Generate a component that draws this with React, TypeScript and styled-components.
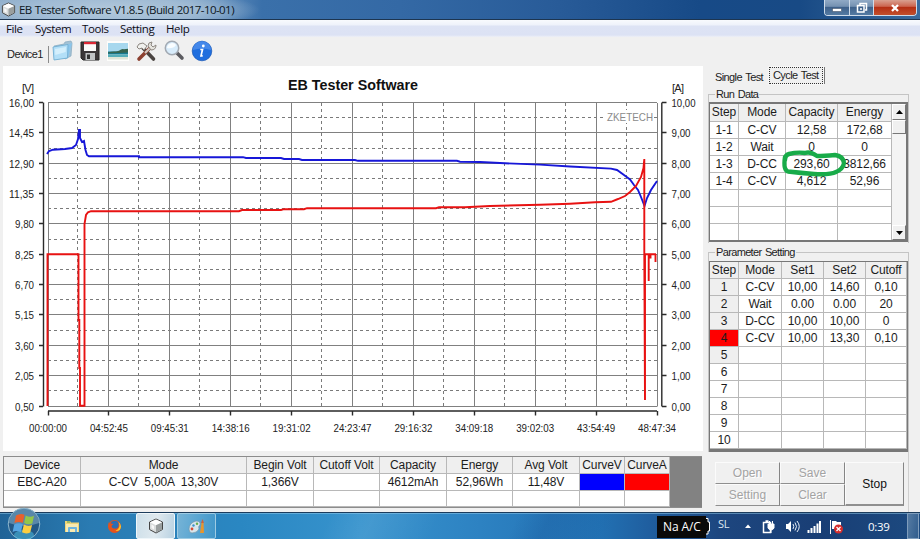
import React from "react";
import styled, { createGlobalStyle, css } from "styled-components";

const GlobalStyle = createGlobalStyle`
  *, *::before, *::after { box-sizing: border-box; }
  body { margin: 0; overflow: hidden; }
`;

const Screen = styled.div`
  width: 920px;
  height: 539px;
  display: flex;
  flex-direction: column;
  overflow: hidden;
  background: #f0f0f0;
  color: #1c1c1c;
  font: 12px "Liberation Sans", Arial, sans-serif;
  svg { display: block; flex: none; }
`;

const TitleBar = styled.header`
  height: 20px;
  flex: none;
  display: flex;
  align-items: flex-start;
  justify-content: space-between;
  padding-left: 1px;
  border-bottom: 1px solid #1d3550;
  background:
    radial-gradient(ellipse 150px 22px at 110px 10px, #b3c9dc 0%, #a0bbd4 55%, rgba(120, 160, 200, 0) 100%),
    linear-gradient(90deg, #8cabc9 0, #7da3c8 190px, #3a70aa 262px, #3469a5 400px, #285b98 560px, #174a87 700px, #184a85 800px, #3a6a9c 920px);
`;
const TitleText = styled.div`
  display: flex;
  align-items: center;
  gap: 3px;
  height: 19px;
  font: 11.5px "Open Sans", "Noto Sans", sans-serif;
  letter-spacing: -0.55px;
  word-spacing: 0.5px;
  color: #0c1622;
  white-space: nowrap;
`;
const WindowButtons = styled.div`
  display: flex;
  margin-right: 3px;
  height: 16px;
  border: 1px solid #cfdcea;
  border-top: 0;
  border-radius: 0 0 4px 4px;
  overflow: hidden;
`;
const WindowButton = styled.div<{ $w: number; $close?: boolean }>`
  width: ${(p) => p.$w}px;
  display: grid;
  place-items: center;
  border-right: ${(p) => (p.$close ? "0" : "1px solid #cfdcea")};
  background: ${(p) =>
    p.$close
      ? "linear-gradient(#d9a090, #cc6650 42%, #b52f14 50%, #c2502c)"
      : "linear-gradient(#91aac6, #7592b2 42%, #3e618b 50%, #557ba3)"};
`;

const MenuBar = styled.nav`
  height: 17px;
  flex: none;
  display: grid;
  grid-template-columns: 29px 47px 38px 46px 40px;
  padding-left: 6px;
  align-items: center;
  background: linear-gradient(#f8fafd 0, #eef2fa 5px, #dde3f4 6px, #dce2f4 15px, #eef0f6 17px);
  font: 11.5px "Open Sans", "Noto Sans", sans-serif;
  letter-spacing: -0.4px;
  color: #0c0c14;
`;
const ToolBar = styled.div`
  height: 29px;
  flex: none;
  display: flex;
  align-items: center;
  padding: 1px 0 0 7px;
`;
const DeviceTab = styled.div`
  width: 42px;
  height: 17px;
  margin-top: 4px;
  border-right: 1px solid #8b8b8b;
  font-size: 11px;
  line-height: 17px;
  letter-spacing: -0.55px;
`;
const Tools = styled.div`
  display: grid;
  grid-template-columns: repeat(6, 28px);
  padding-left: 2px;
  margin-top: -2px;
`;

const Body = styled.main`
  height: 446px;
  flex: none;
  display: flex;
`;
const LeftColumn = styled.section`
  width: 703px;
  padding-left: 3px;
  display: flex;
  flex-direction: column;
`;
const ChartPanel = styled.div`
  height: 385px;
  background: #fff;
`;
const ChartSvg = styled.svg`
  text {
    font-family: "Liberation Sans", Arial, sans-serif;
    font-size: 11px;
    fill: #222;
  }
  .heading { font-size: 14px; font-weight: bold; fill: #111; }
  .mark { fill: #8a8a8a; }
`;

const StatusTable = styled.div`
  margin-top: 5px;
  width: 699px;
  height: 52px;
  display: grid;
  grid-template-columns: 77px 166px 67px 66px 67px 66px 67px 45px 45px 1fr;
  grid-template-rows: 17px 17px 16px;
  background: #828282;
  border: 1px solid #8c8c8c;
  border-right: 0;
`;
const Cell = styled.div<{ $bg?: string }>`
  display: flex;
  align-items: center;
  justify-content: center;
  overflow: hidden;
  white-space: pre;
  line-height: 16px;
  letter-spacing: -0.1px;
  background: ${(p) => p.$bg || "#fff"};
  border-right: 1px solid #b8b8b8;
  border-bottom: 1px solid #b8b8b8;
`;
const Filler = styled.div`
  grid-column: 10;
  grid-row: 1 / 4;
`;

const RightColumn = styled.aside`
  width: 206px;
  margin-left: 5px;
  display: flex;
  flex-direction: column;
`;
const Tabs = styled.div`
  height: 20px;
  display: flex;
  padding-left: 7px;
  font-size: 11px;
  letter-spacing: -0.6px;
  word-spacing: 1px;
`;
const Tab = styled.div<{ $active?: boolean }>`
  width: 54px;
  white-space: nowrap;
  ${(p) =>
    p.$active
      ? css`
          height: 17px;
          margin-top: 1px;
          padding-left: 3px;
          line-height: 15px;
          border: 1px dotted #333;
          outline: 1px solid #f7f7f7;
          box-shadow: 2px 0 0 #777;
        `
      : css`
          padding-top: 4px;
          line-height: 14px;
        `}
`;
const Group = styled.fieldset<{ $h: number; $top: number }>`
  margin: 0;
  padding: 0;
  width: 201px;
  min-width: 0;
  height: ${(p) => p.$h}px;
  border: 1px solid #c4c4c4;
  border-bottom: 0;
  margin-top: ${(p) => p.$top}px;
`;
const Legend = styled.legend`
  margin-left: 6px;
  padding: 0 1px;
  height: 15px;
  line-height: 15px;
  font-size: 11px;
  letter-spacing: -0.65px;
  word-spacing: 1px;
`;
const RunGrid = styled.div`
  display: flex;
  width: 199px;
  height: 140px;
  border: 1px solid #777;
  border-width: 2px 2px 2px 1px;
  background: #fff;
  overflow: hidden;
`;
const RunCells = styled.div`
  width: 182px;
  display: grid;
  grid-template-columns: 29px 47px 52px 54px;
  grid-template-rows: 17.5px;
  grid-auto-rows: 17px;
`;
const ParamGrid = styled.div`
  display: grid;
  width: 199px;
  height: 191px;
  margin-top: 1px;
  border: 1px solid #777;
  border-width: 1px 1px 3px 1px;
  background: #fff;
  grid-template-columns: 29px 43px 42px 42px 41px;
  grid-auto-rows: 17px;
`;
const ScrollBar = styled.div`
  flex: 1;
  display: flex;
  flex-direction: column;
  background: #f4f4f4;
`;
const ScrollPart = styled.div<{ $h: number; $push?: boolean }>`
  height: ${(p) => p.$h}px;
  margin-top: ${(p) => (p.$push ? "auto" : "0")};
  display: grid;
  place-items: center;
  background: #f0f0f0;
  border: 1px solid #fff;
  border-right-color: #777;
  border-bottom-color: #777;
`;
const ButtonPanel = styled.div`
  flex: 1;
  width: 201px;
  padding: 10px 4px 0 7px;
  border-right: 1px solid #cfcfcf;
`;
const ButtonGrid = styled.div`
  display: grid;
  width: 189px;
  height: 44px;
  grid-template-columns: 65px 65px 59px;
  grid-template-rows: 22px 22px;
`;
const PushButton = styled.button<{ $tall?: boolean }>`
  grid-row: ${(p) => (p.$tall ? "1 / 3" : "auto")};
  grid-column: ${(p) => (p.$tall ? "3" : "auto")};
  padding: 0;
  font: 12px "Liberation Sans", Arial, sans-serif;
  color: #111;
  background: #f0f0f0;
  border: 1px solid #fbfbfb;
  border-right: 1px solid #858585;
  border-bottom: ${(p) => (p.$tall ? 2 : 1)}px solid #8f8f8f;
  &:disabled { color: #a3a3a3; text-shadow: 1px 1px 0 #fff; }
`;

const RingLayer = styled.div`
  position: absolute;
  left: 780px;
  top: 148px;
`;

const TaskBar = styled.footer`
  height: 27px;
  flex: none;
  display: flex;
  align-items: stretch;
  border-top: 1px solid #1c3c5c;
  box-shadow: inset 0 1px 0 rgba(150, 205, 235, 0.5);
  background:
    linear-gradient(115deg, transparent 300px, rgba(255, 255, 255, 0.07) 340px, transparent 400px, transparent 470px, rgba(10, 50, 120, 0.15) 500px, transparent 560px),
    linear-gradient(90deg, #206397 0, #2a7bb2 90px, #2a87c2 240px, #3793cd 360px, #2d82c2 480px, #2271b3 600px, #1f5e9f 650px, #1d467f 720px, #193e75 820px, #1c4a80 920px);
`;
const Start = styled.div`
  width: 48px;
  padding-left: 7px;
  margin-top: -6px;
  z-index: 1;
`;
const TaskButton = styled.div<{ $w: number; $kind?: "active" | "open" }>`
  width: ${(p) => p.$w}px;
  display: grid;
  place-items: center;
  ${(p) =>
    p.$kind === "active" &&
    css`
      border: 1px solid #eef6fa;
      background: linear-gradient(100deg, #cddfe9, #dfe9ef 50%, #b9d2e2);
      border-radius: 2px;
    `}
  ${(p) =>
    p.$kind === "open" &&
    css`
      border: 1px solid #9dcbe3;
      background: linear-gradient(100deg, #76b3d6, #5aa6d2 50%, #4196c9);
      border-radius: 2px;
    `}
`;
const Tray = styled.div`
  margin-left: auto;
  display: grid;
  grid-template-columns: 49px 8px 31px 17px 23px 22px 22px 20px 58px 13px;
  align-items: center;
  color: #fff;
  font: 11.5px "Open Sans", "Noto Sans", sans-serif;
  letter-spacing: -0.3px;
`;
const PowerLabel = styled.div`
  height: 22px;
  margin-top: 2px;
  line-height: 21px;
  padding-left: 6px;
  background: #090909;
  white-space: nowrap;
  font-size: 12px;
  letter-spacing: -0.1px;
`;
const Language = styled.div`
  padding-left: 4px;
  margin-top: -5px;
  font-size: 11px;
  color: #dde7f2;
`;
const Clock = styled.div`
  padding-left: 19px;
  margin-top: 1px;
`;
const ShowDesktop = styled.div`
  width: 12px;
  height: 26px;
  border: 1px solid #7f9dbc;
  background: linear-gradient(100deg, #557ba3, #315d8d);
`;

const CubeIcon = ({ size }: { size: number }) => (
  <svg width={size} height={size} viewBox="0 0 16 16">
    <path d="M8 1 14.5 4v7.5L8 15 1.5 11.5V4Z" fill="#d9dcdc" stroke="#444" strokeWidth="1" />
    <path d="M8 1.5 14 4.2 8 7.3 2 4.2Z" fill="#fff" />
    <path d="M8 7.3 14 4.4v7L8 14.5Z" fill="#9a9f9f" />
    <path d="M3.5 6.5 6 8v3.5L3.5 10Z" fill="#f8f8f8" />
  </svg>
);

const FolderIcon = () => (
  <svg width="24" height="22" viewBox="0 0 24 22">
    <path d="M3 6 13 4l1-2 6-1 1 2-1 13-6 3Z" fill="#a2c2d6" stroke="#86a9bf" strokeWidth=".7" />
    <path d="M2 7 17 4.5 21 3 17 18 3 20Z" fill="#8bc6ec" />
    <path d="M2 7 17 4.5 16.5 18 3 20Z" fill="#b3dff7" stroke="#6ca9ce" strokeWidth=".8" />
    <path d="M4 9 15 7l-.3 5L4.3 15Z" fill="#d4effc" />
  </svg>
);
const FloppyIcon = () => (
  <svg width="22" height="22" viewBox="0 0 22 22">
    <path d="M2 2h18v18H4l-2-2Z" fill="#3a3638" stroke="#252525" />
    <path d="M5 2h12v9H5Z" fill="#fafafa" />
    <path d="M5 2h12v2.2H5Z" fill="#da2735" />
    <path d="M6.5 13h9.5v7H6.5Z" fill="#bfc2c4" />
    <path d="M8 14.5h3V19H8Z" fill="#333" />
  </svg>
);
const PictureIcon = () => (
  <svg width="22" height="22" viewBox="0 0 22 22">
    <rect x="0" y="1" width="22" height="20" fill="#fdfdfb" />
    <rect x="1" y="3" width="20" height="9" fill="#a7d8ee" />
    <rect x="1" y="11.5" width="20" height="3" fill="#177b91" />
    <path d="M1 12.5q4-1.500 8-1l3-.7q3-2.500 5-1.500l4-.6V12.500q-10 .8-20 .7Z" fill="#35644f" />
    <rect x="1" y="14.5" width="20" height="3" fill="#55aeb9" />
    <rect x="1" y="17" width="20" height="2.5" fill="#dfe6d7" />
  </svg>
);
const ToolsIcon = () => (
  <svg width="23" height="22" viewBox="0 0 23 22">
    <path d="m8 8 10.500 11" stroke="#4a4441" strokeWidth="3.600" strokeLinecap="round" />
    <path d="M15 8 4 19" stroke="#8c4030" strokeWidth="3.600" strokeLinecap="round" />
    <path d="m15 8-5 5" stroke="#cfc8c2" strokeWidth="2.200" />
    <path d="M2 7q1-4 6-4l4 3-3 4-2-2-3 1Z" fill="#f1f1ee" stroke="#8d8781" />
    <path d="M13 6q0-4 4-4l-1 3 2 2 3-2q0 5-5 5Z" fill="#e7e5df" stroke="#8d8781" />
  </svg>
);
const SearchIcon = () => (
  <svg width="23" height="22" viewBox="0 0 23 22">
    <path d="m13 12 6 6" stroke="#5b5b60" strokeWidth="3.600" strokeLinecap="round" />
    <circle cx="9" cy="8" r="6.700" fill="#d8ecfb" stroke="#a2a9b2" strokeWidth="1.500" />
    <path d="M4 8q0-4 5-5 3 0 4 2-3 4-9 3" fill="#f9fdff" />
  </svg>
);
const InfoIcon = () => (
  <svg width="22" height="22" viewBox="0 0 22 22">
    <circle cx="11" cy="11" r="9.8" fill="#1f6ede" stroke="#1858b6" strokeWidth=".7" />
    <path d="M2 10a9 8.800 0 0 1 18 0q-9-3-18 0" fill="#4488ea" />
    <circle cx="12.300" cy="6" r="1.400" fill="#fff" />
    <path d="M9.300 9.500h2.200l-1.500 6.300h1.700" fill="none" stroke="#fff" strokeWidth="1.700" />
  </svg>
);
const OrbIcon = () => (
  <svg width="34" height="33" viewBox="0 0 34 33">
    <circle cx="17" cy="17" r="15.8" fill="#225886" stroke="#8db7ce" strokeWidth="1" />
    <path d="M2 16a15 14.500 0 0 1 30 0q-15 6-30 0" fill="#87afc6" opacity=".55" />
    <ellipse cx="17" cy="28" rx="10" ry="5" fill="#49b4d8" opacity=".6" />
    <path d="M9 8.500q4.500-2.700 8.500-.7l-1.600 8q-4.500-1.800-8.500.3Z" fill="#e9602c" />
    <path d="M18.700 8.500q4.300 2.200 8.300.3l-1.700 7.700q-4.500 1.600-8.200-.5Z" fill="#93c64a" />
    <path d="M7.200 17.500q4.500-2.200 8.500-.3l-1.800 8q-4.500-2.200-8.300-.2Z" fill="#55a5e3" />
    <path d="M16.900 17.500q4.200 2.200 8.200.4l-1.900 7.600q-4.300 2-8.200-.2Z" fill="#fbce40" />
  </svg>
);
const ExplorerIcon = () => (
  <svg width="16" height="14" viewBox="0 0 16 14">
    <path d="M1 2h5l1 1.500h8V13H1Z" fill="#efd477" />
    <path d="M2 5h12v8H2Z" fill="#f9eab1" />
    <path d="M4 13V9q0-1 1-1h7q1 0 1 1v4h-2v-3H6v3Z" fill="#6fb5df" />
    <path d="M3 3h3" stroke="#58a14f" />
  </svg>
);
const FirefoxIcon = () => (
  <svg width="15" height="15" viewBox="0 0 15 15">
    <circle cx="7.500" cy="7.500" r="6.500" fill="#e4521d" />
    <circle cx="7.600" cy="5.800" r="4" fill="#2b6db5" />
    <path d="M1.500 2q0 2 1 3 2-1 4 0-2 1-2 3 1 2 4 2-4 2-7-2" fill="#e4521d" />
    <path d="M11.500 3q3 6-3 9 5 .5 5.500-4.500Q13.800 5 11.500 3" fill="#fac72c" />
  </svg>
);
const PaintIcon = () => (
  <svg width="18" height="17" viewBox="0 0 18 17">
    <path d="M1 11q0-6 7-8 5 0 4 4-2 1-1 4-2 4-7 4-3 0-3-4" fill="#d8e6ec" stroke="#7396a9" strokeWidth=".7" />
    <circle cx="4" cy="11" r="1.400" fill="#d54b34" />
    <circle cx="5.500" cy="7.500" r="1.200" fill="#3a93cb" />
    <circle cx="9" cy="5.700" r="1.200" fill="#65ad4d" />
    <path d="M12 15 13.500 5h2l.5 10Z" fill="#e7962e" />
    <path d="m13 5 1.500-4L16 5Z" fill="#cf633c" />
  </svg>
);

const X0 = 48;
const Y0 = 103;
const DX = 60.9;
const DY = 30.35;
const X1 = X0 + DX * 10;
const Y1 = Y0 + DY * 10;
const steps = Array.from({ length: 11 }, (_, i) => i);
const halves = Array.from({ length: 10 }, (_, i) => i + 0.5);
const volts = ["16,00", "14,45", "12,90", "11,35", "9,80", "8,25", "6,70", "5,15", "3,60", "2,05", "0,50"];
const amps = ["10,00", "9,00", "8,00", "7,00", "6,00", "5,00", "4,00", "3,00", "2,00", "1,00", "0,00"];
const times = ["00:00:00", "04:52:45", "09:45:31", "14:38:16", "19:31:02", "24:23:47", "29:16:32", "34:09:18", "39:02:03", "43:54:49", "48:47:34"];
const snap = (v: number) => Math.round(v) - 0.5;

const Chart = () => (
  <ChartSvg width="700" height="385" viewBox="3 66 700 385">
    <text className="heading" x="288" y="90" textLength="130" lengthAdjust="spacingAndGlyphs">EB Tester Software</text>
    <text x="22" y="92" textLength="12">[V]</text>
    <text x="672" y="92" textLength="12">[A]</text>
    <g stroke="#7a7a7a" strokeDasharray="3 3" fill="none">
      {halves.map((h) => (
        <path key={h} d={`M${X0} ${snap(Y0 + h * DY)}H${X1}M${snap(X0 + h * DX)} ${Y0}V${Y1}`} />
      ))}
    </g>
    <g stroke="#808080" fill="none">
      {steps.map((i) => (
        <path key={i} d={`M${X0} ${snap(Y0 + i * DY)}H${X1}M${snap(X0 + i * DX + 0.5)} ${Y0}V${Y1}`} />
      ))}
    </g>
    <rect x="606" y="110" width="46" height="13" fill="#fff" />
    <text className="mark" x="607" y="121" textLength="46" lengthAdjust="spacingAndGlyphs">ZKETECH</text>
    <g stroke="#2a2a2a" strokeWidth="1.4" fill="none">
      <path d={`M43.5 ${Y0 - 0.5}V${Y1}M661.8 ${Y0 - 0.5}V${Y1}M${X0} 411H${X1}`} />
      {steps.map((i) => (
        <path key={i} d={`M39 ${snap(Y0 + i * DY)}H43M662 ${snap(Y0 + i * DY)}H666.5M${snap(X0 + i * DX + 0.5)} 411V415.5`} />
      ))}
    </g>
    {steps.map((i) => (
      <React.Fragment key={i}>
        <text x={34} y={Y0 + i * DY + 4} textAnchor="end" textLength={volts[i].length === 5 ? 25 : 19} lengthAdjust="spacingAndGlyphs">{volts[i]}</text>
        <text x={671.5} y={Y0 + i * DY + 4} textLength={amps[i].length === 5 ? 24 : 19} lengthAdjust="spacingAndGlyphs">{amps[i]}</text>
        <text x={X0 + i * DX} y="432" textAnchor="middle" textLength="38" lengthAdjust="spacingAndGlyphs">{times[i]}</text>
      </React.Fragment>
    ))}
    <path
      d="M47 154 49 151 53 149.7 65 149 72 148 76 145 78 139 79 130 80 130V138L82 142 84 141 85.5 150 87 155 89 156.300H139V157.200H243L246 158H281L284 159H299L302 160H355L358 160.800H457L460 161.700 480 162 505 163.300 540 164.600 570 166.500 611 168.600 617 170 624 175 630 179.500 634 185 638 190 641 197 644.500 206 647 198 651 190 657 181"
      fill="none" stroke="#1717d8" strokeWidth="1.9"
    />
    <path
      d="M47.500 406V254.300H78.500V320H79.300V368H80V405.800H84.500V224L86 215 88 212.300 91 211.200H239L242 210H281L284 209.200H304L307 208.200H436L439 207.300H465L490 206 540 204.800 570 203.700 595 202.300 611 201.800 618 199 625 196 630 192 636 186 641 177 643.500 168 644.300 159V254L645 400V254.300H656M648.700 254V281M650.500 254V258.500M655.500 254V262"
      fill="none" stroke="#e81212" strokeWidth="1.9"
    />
  </ChartSvg>
);

const HEAD = "#efefef";
const statusHead = ["Device", "Mode", "Begin Volt", "Cutoff Volt", "Capacity", "Energy", "Avg Volt", "CurveV", "CurveA"];
const statusRow = ["EBC-A20", "C-CV  5,00A  13,30V", "1,366V", "", "4612mAh", "52,96Wh", "11,48V", "", ""];
const runRows = [
  ["Step", "Mode", "Capacity", "Energy"],
  ["1-1", "C-CV", "12,58", "172,68"],
  ["1-2", "Wait", "0", "0"],
  ["1-3", "D-CC", "293,60", "3812,66"],
  ["1-4", "C-CV", "4,612", "52,96"],
  ["", "", "", ""],
  ["", "", "", ""],
  ["", "", "", ""],
];
const paramRows = [
  ["Step", "Mode", "Set1", "Set2", "Cutoff"],
  ["1", "C-CV", "10,00", "14,60", "0,10"],
  ["2", "Wait", "0.00", "0.00", "20"],
  ["3", "D-CC", "10,00", "10,00", "0"],
  ["4", "C-CV", "10,00", "13,30", "0,10"],
  ...["5", "6", "7", "8", "9", "10"].map((n) => [n, "", "", "", ""]),
];
const paramFill = (r: number, c: number) => {
  if (r === 0) return HEAD;
  if (c === 0 && r === 4) return "#ff0000";
  return c === 0 && r <= 5 ? HEAD : "#fff";
};
const statusFill = (c: number) => (c === 7 ? "#0000ff" : c === 8 ? "#ff0000" : "#fff");

export default function App() {
  return (
    <Screen>
      <GlobalStyle />
      <TitleBar>
        <TitleText>
          <CubeIcon size={15} />
          EB Tester Software V1.8.5 (Build 2017-10-01)
        </TitleText>
        <WindowButtons>
          <WindowButton $w={25}>
            <svg width="12" height="10"><rect x="1.5" y="5.5" width="9" height="3" fill="#fff" stroke="#45556b" strokeWidth=".6" /></svg>
          </WindowButton>
          <WindowButton $w={24}>
            <svg width="12" height="12" fill="none" stroke="#fff" strokeWidth="1.5"><path d="M4 3V1.5h6.5V8H9" /><rect x="1.5" y="3.5" width="6.5" height="6.5" /><path d="M4 7h2" /></svg>
          </WindowButton>
          <WindowButton $w={42} $close>
            <svg width="12" height="10"><path d="m3 2 6 6M9 2 3 8" stroke="#fff" strokeWidth="2.3" /></svg>
          </WindowButton>
        </WindowButtons>
      </TitleBar>
      <MenuBar>
        <span>File</span><span>System</span><span>Tools</span><span>Setting</span><span>Help</span>
      </MenuBar>
      <ToolBar>
        <DeviceTab>Device1</DeviceTab>
        <Tools>
          <FolderIcon /><FloppyIcon /><PictureIcon /><ToolsIcon /><SearchIcon /><InfoIcon />
        </Tools>
      </ToolBar>
      <Body>
        <LeftColumn>
          <ChartPanel><Chart /></ChartPanel>
          <StatusTable>
            {statusHead.map((t) => <Cell key={t} $bg={HEAD}>{t}</Cell>)}
            {statusRow.map((t, c) => <Cell key={c} $bg={statusFill(c)}>{t}</Cell>)}
            {statusRow.map((_, c) => <Cell key={c} />)}
            <Filler />
          </StatusTable>
        </LeftColumn>
        <RightColumn>
          <Tabs>
            <Tab>Single Test</Tab>
            <Tab $active>Cycle Test</Tab>
          </Tabs>
          <Group $h={156} $top={1}>
            <Legend>Run Data</Legend>
            <RunGrid>
              <RunCells>
                {runRows.flatMap((row, r) => row.map((t, c) => <Cell key={`${r}-${c}`} $bg={r ? "#fff" : HEAD}>{t}</Cell>))}
              </RunCells>
              <ScrollBar>
                <ScrollPart $h={16}><svg width="7" height="4"><path d="M0 4 3.5 0 7 4Z" fill="#000" /></svg></ScrollPart>
                <ScrollPart $h={14} />
                <ScrollPart $h={15} $push><svg width="7" height="4"><path d="M0 0h7L3.5 4Z" fill="#000" /></svg></ScrollPart>
              </ScrollBar>
            </RunGrid>
          </Group>
          <Group $h={207} $top={2}>
            <Legend>Parameter Setting</Legend>
            <ParamGrid>
              {paramRows.flatMap((row, r) => row.map((t, c) => <Cell key={`${r}-${c}`} $bg={paramFill(r, c)}>{t}</Cell>))}
            </ParamGrid>
          </Group>
          <ButtonPanel>
            <ButtonGrid>
              <PushButton disabled>Open</PushButton>
              <PushButton disabled>Save</PushButton>
              <PushButton $tall>Stop</PushButton>
              <PushButton disabled>Setting</PushButton>
              <PushButton disabled>Clear</PushButton>
            </ButtonGrid>
          </ButtonPanel>
        </RightColumn>
      </Body>
      <TaskBar>
        <Start><OrbIcon /></Start>
        <TaskButton $w={48}><ExplorerIcon /></TaskButton>
        <TaskButton $w={36}><FirefoxIcon /></TaskButton>
        <TaskButton $w={4} />
        <TaskButton $w={39} $kind="active"><CubeIcon size={16} /></TaskButton>
        <TaskButton $w={2} />
        <TaskButton $w={39} $kind="open"><PaintIcon /></TaskButton>
        <Tray>
          <PowerLabel>Na A/C</PowerLabel>
          <svg width="4" height="18"><path d="M0 1.5h2V5h1.5v9H2v3H0" fill="#090909" stroke="#fff" /></svg>
          <Language>SL</Language>
          <svg width="7" height="4"><path d="M0 4 3 .5 6 4Z" fill="#fff" /></svg>
          <svg width="14" height="15"><path d="M1.5 3.5h7v10h-7ZM3.5 2h3" stroke="#fff" strokeWidth="1.5" fill="none" /><path d="M6 5h6v4q-1 2-3 2T6 9ZM7.5 2v3M10.5 2v3M9 11v3" fill="#fff" stroke="#fff" /></svg>
          <svg width="15" height="13"><path d="M1 4h2l3-3v11L3 9H1Z" fill="#fff" /><path d="M8 4q1.5 2.5 0 5M10 2.5q3 4 0 8M12 1q4.5 5.5 0 11" stroke="#e8eff7" fill="none" /></svg>
          <svg width="14" height="13"><path d="M1.5 13v-3M4.5 13V8M7.5 13V6M10.5 13V3.5M13 13V1" stroke="#fff" strokeWidth="2" /></svg>
          <svg width="15" height="15"><path d="M1.5 1v14" stroke="#fff" /><path d="M3 2h4l1 1h4v7H3Z" fill="#fff" /><circle cx="9.5" cy="10" r="4.500" fill="#d42c2c" /><path d="m7.5 8 4 4m0-4-4 4" stroke="#fff" strokeWidth="1.3" /></svg>
          <Clock>0:39</Clock>
          <ShowDesktop />
        </Tray>
      </TaskBar>
      <RingLayer>
        <svg width="70" height="32">
          <path d="M5 9Q3 22 8 23.500 21 25 34 26 50 27 56 24 63 21 64 15 63 8 55 7 44 8 37 8 30 3 25 5 17 4 9 6 5 7 5 12" fill="none" stroke="#18ab49" strokeWidth="4.400" strokeLinecap="round" strokeLinejoin="round" />
        </svg>
      </RingLayer>
    </Screen>
  );
}
